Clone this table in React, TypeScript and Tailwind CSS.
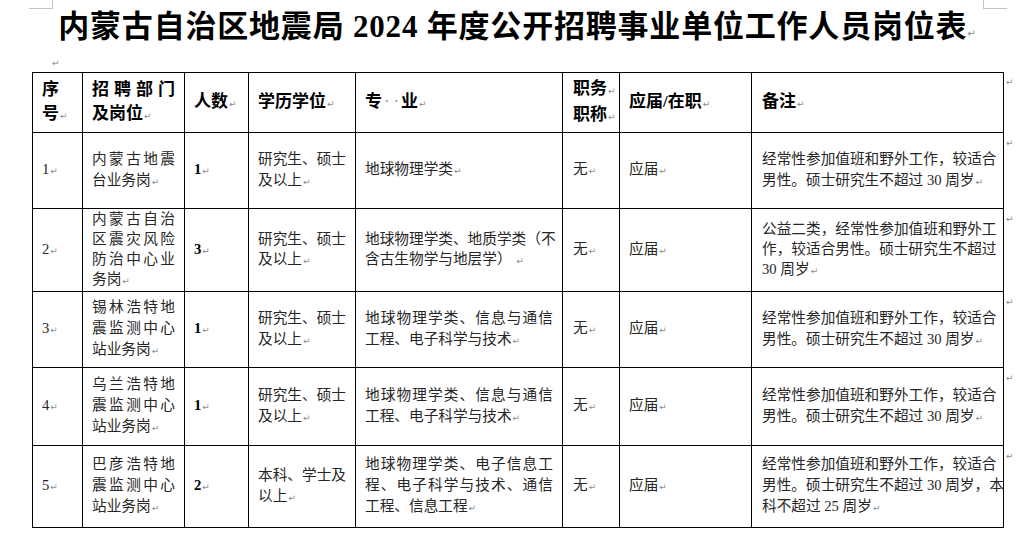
import React from "react";

type Row = {
  no: string;
  dept: string[];
  count: string;
  edu: string[];
  major: string[];
  duty: string;
  kind: string;
  note: string[];
  h: string;
};

const rows: Row[] = [
  {
    no: "1",
    dept: ["内蒙古地震", "台业务岗↵"],
    count: "1",
    edu: ["研究生、硕士", "及以上↵"],
    major: ["地球物理学类↵"],
    duty: "无",
    kind: "应届",
    note: ["经常性参加值班和野外工作，较适合", "男性。硕士研究生不超过 30 周岁↵"],
    h: "h-[76px] leading-[21px]",
  },
  {
    no: "2",
    dept: ["内蒙古自治", "区震灾风险", "防治中心业", "务岗↵"],
    count: "3",
    edu: ["研究生、硕士", "及以上↵"],
    major: ["地球物理学类、地质学类（不", "含古生物学与地层学） ↵"],
    duty: "无",
    kind: "应届",
    note: ["公益二类，经常性参加值班和野外工", "作，较适合男性。硕士研究生不超过", "30 周岁↵"],
    h: "h-[83px] leading-[20px]",
  },
  {
    no: "3",
    dept: ["锡林浩特地", "震监测中心", "站业务岗↵"],
    count: "1",
    edu: ["研究生、硕士", "及以上↵"],
    major: ["地球物理学类、信息与通信", "工程、电子科学与技术↵"],
    duty: "无",
    kind: "应届",
    note: ["经常性参加值班和野外工作，较适合", "男性。硕士研究生不超过 30 周岁↵"],
    h: "h-[76px] leading-[21px]",
  },
  {
    no: "4",
    dept: ["乌兰浩特地", "震监测中心", "站业务岗↵"],
    count: "1",
    edu: ["研究生、硕士", "及以上↵"],
    major: ["地球物理学类、信息与通信", "工程、电子科学与技术↵"],
    duty: "无",
    kind: "应届",
    note: ["经常性参加值班和野外工作，较适合", "男性。硕士研究生不超过 30 周岁↵"],
    h: "h-[78px] leading-[21px]",
  },
  {
    no: "5",
    dept: ["巴彦浩特地", "震监测中心", "站业务岗↵"],
    count: "2",
    edu: ["本科、学士及", "以上↵"],
    major: ["地球物理学类、电子信息工", "程、电子科学与技术、通信", "工程、信息工程↵"],
    duty: "无",
    kind: "应届",
    note: ["经常性参加值班和野外工作，较适合", "男性。硕士研究生不超过 30 周岁，本", "科不超过 25 周岁↵"],
    h: "h-[82px] leading-[21px]",
  },
];

const Mark = () => (
  <span className="font-['DejaVu_Sans',sans-serif] text-[9px] font-normal text-[#8c8c8c] ml-[1px]">↵</span>
);

// a line ending in ↵ closes a paragraph (left aligned), other lines are spread to the cell width
const Lines = ({ lines }: { lines: string[] }) => (
  <>
    {lines.map((l, i) =>
      l.endsWith("↵") ? (
        <div key={i} className="text-left whitespace-nowrap">
          {l.slice(0, -1)}
          <Mark />
        </div>
      ) : (
        <div key={i} className="text-justify [text-align-last:justify] whitespace-nowrap">
          {l}
        </div>
      )
    )}
  </>
);

const td = "border border-black align-middle pl-[9px] pr-[9px] py-0";

export default function App() {
  return (
    <div className="w-[1034px] h-[550px] bg-white overflow-hidden font-['Liberation_Serif','Noto_Sans_CJK_SC',serif] text-[#262626]">
      <div className="flex justify-between h-[10px]">
        <div className="ml-[29px] w-[24px] h-[9px] border-r border-b border-[#c4c4c4]" />
        <div className="mr-[27px] w-[24px] h-[9px] border-l border-b border-[#c4c4c4]" />
      </div>

      <div className="h-[40px] flex items-center justify-center">
        <h1 className="text-[31px] leading-[40px] font-semibold text-black tracking-[0.8px]">
          内蒙古自治区地震局 2024 年度公开招聘事业单位工作人员岗位表
          <span className="font-['DejaVu_Sans',sans-serif] text-[10px] font-normal text-[#8c8c8c] tracking-normal">↵</span>
        </h1>
      </div>

      <div className="h-[22px] pl-[51px] leading-[22px]">
        <Mark />
      </div>

      <table className="ml-[32px] border-collapse table-fixed w-[991px]">
        <colgroup>
          <col className="w-[50px]" />
          <col className="w-[102px]" />
          <col className="w-[64px]" />
          <col className="w-[107px]" />
          <col className="w-[207px]" />
          <col className="w-[57px]" />
          <col className="w-[132px]" />
          <col className="w-[252px]" />
          <col className="w-[20px]" />
        </colgroup>
        <tbody>
          <tr className="h-[60px] text-[17px] leading-[24px] font-bold text-black">
            <td className={td}>
              <Lines lines={["序", "号↵"]} />
            </td>
            <td className={td}>
              <Lines lines={["招聘部门", "及岗位↵"]} />
            </td>
            <td className={td}>
              <Lines lines={["人数↵"]} />
            </td>
            <td className={td}>
              <Lines lines={["学历学位↵"]} />
            </td>
            <td className={td}>
              <div className="whitespace-nowrap">
                专
                <span className="inline-flex w-[19px] justify-around font-normal text-[#9a9a9a]">
                  <span>·</span>
                  <span>·</span>
                </span>
                业<Mark />
              </div>
            </td>
            <td className={`${td} pl-[10px] pr-0`}>
              <Lines lines={["职务↵", "职称↵"]} />
            </td>
            <td className={td}>
              <Lines lines={["应届/在职↵"]} />
            </td>
            <td className={`${td} pl-[10px]`}>
              <Lines lines={["备注↵"]} />
            </td>
            <td className="align-top pt-[2px] pl-[1px] leading-[10px]">
              <Mark />
            </td>
          </tr>

          {rows.map((r) => (
            <tr key={r.no} className={`${r.h} text-[14.67px]`}>
              <td className={td}>
                <Lines lines={[r.no + "↵"]} />
              </td>
              <td className={td}>
                <Lines lines={r.dept} />
              </td>
              <td className={`${td} font-bold text-black`}>
                <Lines lines={[r.count + "↵"]} />
              </td>
              <td className={`${td} pr-[10px]`}>
                <Lines lines={r.edu} />
              </td>
              <td className={`${td} pl-[8px] pr-[7px]`}>
                <Lines lines={r.major} />
              </td>
              <td className={`${td} pl-[10px] pr-0`}>
                <Lines lines={[r.duty + "↵"]} />
              </td>
              <td className={`${td} pl-[8px]`}>
                <Lines lines={[r.kind + "↵"]} />
              </td>
              <td className={`${td} pl-[10px] pr-[8px]`}>
                <Lines lines={r.note} />
              </td>
              <td className="align-top pt-[3px] pl-[1px] leading-[10px]">
                <Mark />
              </td>
            </tr>
          ))}
        </tbody>
      </table>
    </div>
  );
}
